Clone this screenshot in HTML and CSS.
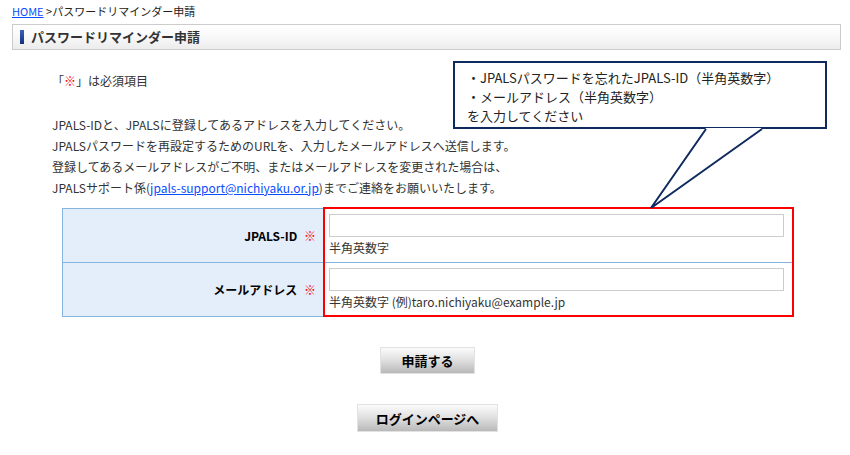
FILE: index.html
```html
<!DOCTYPE html>
<html lang="ja">
<head>
  <meta charset="utf-8">
  <link rel="stylesheet" href="styles.css">
</head>
<body>
  <div class="page">
    <div class="crumb"><a href="#">HOME</a> &gt;パスワードリマインダー申請</div>
    <h1 class="title">パスワードリマインダー申請</h1>

    <p class="note">「<span class="req">※</span>」は必須項目</p>

    <p class="lead">
      JPALS-IDと、JPALSに登録してあるアドレスを入力してください。<br>
      JPALSパスワードを再設定するためのURLを、入力したメールアドレスへ送信します。<br>
      登録してあるメールアドレスがご不明、またはメールアドレスを変更された場合は、<br>
      JPALSサポート係(<a href="#">jpals-support@nichiyaku.or.jp</a>)までご連絡をお願いいたします。
    </p>

    <div class="form-wrap">
      <table class="form">
        <tr>
          <th>JPALS-ID <span class="req">※</span></th>
          <td>
            <input type="text" class="field">
            <div class="hint">半角英数字</div>
          </td>
        </tr>
        <tr>
          <th>メールアドレス <span class="req">※</span></th>
          <td>
            <input type="text" class="field">
            <div class="hint">半角英数字 (例)taro.nichiyaku@example.jp</div>
          </td>
        </tr>
      </table>
      <div class="mark"></div>
    </div>

    <div class="actions">
      <button class="btn btn-submit">申請する</button>
      <button class="btn btn-login">ログインページへ</button>
    </div>

    <!-- annotation balloon -->
    <div class="callout">
      ・JPALSパスワードを忘れたJPALS-ID（半角英数字）<br>
      ・メールアドレス（半角英数字）<br>
      を入力してください
    </div>
    <svg class="tail" width="140" height="90" viewBox="640 125 140 90">
      <polygon points="706,128 651,208 762,128" fill="#fff"/>
      <polyline points="706,129 651,208 762,129" fill="none" stroke="#0f2a5e" stroke-width="2"/>
    </svg>
  </div>
</body>
</html>
```

FILE: styles.css
```css
body {
  margin: 0;
  background: #fff;
  font-family: "Noto Sans CJK JP", "Noto Sans", sans-serif;
  color: #333;
}

.page {
  position: relative;
  width: 850px;
  height: 455px;
}

a {
  color: #0a4cff;
}

.crumb {
  padding: 4px 12px 0;
  font-size: 11px;
  line-height: 14px;
  color: #222;
}

.title {
  margin: 6px 9px 0 12px;
  height: 24px;
  border: 1px solid #cccccc;
  background: linear-gradient(to bottom, #ffffff 0%, #fafafa 40%, #ececec 100%);
  font-size: 13px;
  line-height: 24px;
  font-weight: bold;
  color: #333;
  display: flex;
  align-items: center;
  gap: 7px;
  padding-left: 7px;
}

.title::before {
  content: '';
  width: 4px;
  height: 14px;
  background: linear-gradient(to bottom, #3a5fb8, #16307a);
}

.note {
  margin: 22px 0 0 52px;
  font-size: 12px;
  line-height: 18px;
}

.req {
  color: #ff0000;
  font-weight: normal;
}

.lead {
  margin: 24px 0 0 52px;
  font-size: 12px;
  line-height: 21px;
}

.form-wrap {
  position: relative;
  margin: 10px 0 0 62px;
  width: 731px;
}

.form {
  width: 731px;
  border-collapse: collapse;
  font-size: 12px;
}

.form th,
.form td {
  border: 1px solid #86b4e0;
  height: 40px;
}

.form th {
  width: 253px;
  padding: 0 7px 0 0;
  background: #e3eefa;
  text-align: right;
  color: #000;
  font-weight: bold;
  white-space: nowrap;
}

.form th .req {
  margin-left: 4px;
}

.form td {
  padding: 5px 8px 7px 5px;
  vertical-align: top;
}

.field {
  display: block;
  box-sizing: border-box;
  width: 100%;
  height: 23px;
  margin: 0;
  border: 1px solid #cccccc;
  padding: 2px 4px;
  font-size: 12px;
}

.hint {
  margin-top: 4px;
  line-height: 14px;
  color: #333;
}

.mark {
  position: absolute;
  left: 261px;
  top: -1px;
  width: 467px;
  height: 106px;
  border: 2px solid #ff0000;
}

.actions {
  width: 731px;
  margin: 30px 0 0 62px;
  display: flex;
  flex-direction: column;
  align-items: center;
  gap: 30px;
}

.btn {
  font-family: inherit;
  font-size: 13px;
  font-weight: bold;
  color: #000;
  border: 1px solid #e2e2e2;
  background: linear-gradient(to bottom, #fbfbfb 0%, #e2e2e2 45%, #b9b9b9 100%);
  padding: 0;
}

.btn-submit {
  width: 95px;
  height: 27px;
}

.btn-login {
  width: 141px;
  height: 28px;
}

.callout {
  position: absolute;
  left: 453px;
  top: 61px;
  width: 358px;
  height: 59px;
  padding: 5px 0 0 12px;
  border: 2px solid #0f2a5e;
  background: #fff;
  font-size: 13px;
  line-height: 19px;
  color: #222;
}

.tail {
  position: absolute;
  left: 640px;
  top: 125px;
}
```
